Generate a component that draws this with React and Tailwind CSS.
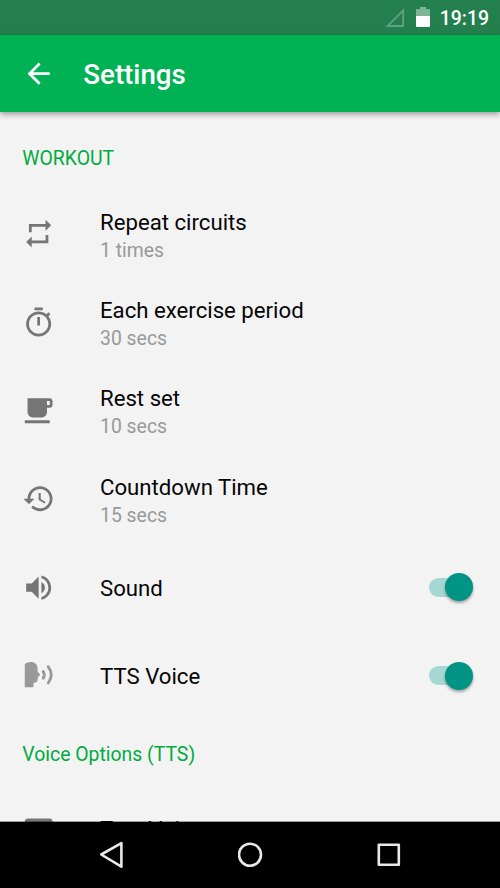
import React from "react";

const ICONS = {
  repeat: "M7 7h10v3l4-4-4-4v3H5v6h2V7zm10 10H7v-3l-4 4 4 4v-3h12v-6h-2v4z",
  timer:
    "M15 1H9v2h6V1zm-4 13h2V8h-2v6zm8.03-6.61l1.42-1.42c-.43-.51-.9-.99-1.41-1.41l-1.42 1.42C16.07 4.74 14.12 4 12 4c-4.97 0-9 4.03-9 9s4.02 9 9 9 9-4.03 9-9c0-2.12-.74-4.07-1.97-5.61zM12 20c-3.87 0-7-3.13-7-7s3.13-7 7-7 7 3.13 7 7-3.13 7-7 7z",
  cafe: "M20 3H4v10c0 2.21 1.79 4 4 4h6c2.21 0 4-1.79 4-4v-3h2c1.11 0 2-.89 2-2V5c0-1.11-.89-2-2-2zm0 5h-2V5h2v3zM2 21h18v-2H2v2z",
  history:
    "M13 3c-4.97 0-9 4.03-9 9H1l3.89 3.89.07.14L9 12H6c0-3.87 3.13-7 7-7s7 3.13 7 7-3.13 7-7 7c-1.93 0-3.68-.79-4.94-2.06l-1.42 1.42C8.27 19.99 10.51 21 13 21c4.97 0 9-4.03 9-9s-4.03-9-9-9zm-1 5v5l4.28 2.54.72-1.21-3.5-2.08V8H12z",
  volume:
    "M3 9v6h4l5 5V4L7 9H3zm13.5 3c0-1.77-1.02-3.29-2.5-4.03v8.05c1.48-.73 2.5-2.25 2.5-4.02zM14 3.23v2.06c2.89.86 5 3.54 5 6.71s-2.11 5.85-5 6.71v2.06c4.01-.91 7-4.49 7-8.77s-2.99-7.86-7-8.77z",
  message: "M4 3.2h16c1.1 0 2 .9 2 2V18H2V5.2c0-1.1.9-2 2-2z",
};

function Icon({ name }) {
  if (name === "voice") {
    return (
      <svg viewBox="0 0 24 24" className="size-[33.3px] shrink-0 text-[#999999]" fill="currentColor">
        <path d="M2 4C2.9 2.8 4.4 2.2 6.3 2.2c2.9 0 4.8 1.7 4.9 4.5V9l1.7 2c.3.4.2.8-.3 1l-.9.3v1.1l-.5.5.2.8-.4.6v.5c0 .7-.4 1-1 1-1.2.1-1.7.5-1.7 1.4v1.2c0 .7-.3 1-.9 1H2z" />
        <path d="M15.3 9q1.5 2.4 0 4.8" fill="none" stroke="currentColor" strokeWidth="2.1" strokeLinecap="round" />
        <path d="M18.9 5.5q4.4 5.9 0 11.8" fill="none" stroke="currentColor" strokeWidth="2" strokeLinecap="round" />
      </svg>
    );
  }
  return (
    <svg viewBox="0 0 24 24" className="size-[33.3px] shrink-0 text-[#757575]" fill="currentColor">
      <path d={ICONS[name]} />
    </svg>
  );
}

function Switch() {
  return (
    <span role="switch" aria-checked="true" className="ml-auto flex h-[19px] w-[44px] items-center justify-end rounded-full bg-[#a6d8d3]">
      <span className="size-[28px] shrink-0 rounded-full bg-[#009485] shadow-[0_2px_3px_rgba(0,0,0,0.35)]" />
    </span>
  );
}

function Row({ icon, title, value, toggle }) {
  return (
    <div className="flex h-[88.3px] shrink-0 items-center pr-[27px] pl-[22.3px]">
      <Icon name={icon} />
      <div className={value ? "ml-[44.4px] pt-[4px]" : toggle ? "ml-[44.4px] pt-[1px]" : "ml-[44.4px] pb-[4px]"}>
        <div className="text-[22.2px] leading-[28px] text-[#060606]">{title}</div>
        {value && <div className="pt-[1px] text-[19.4px] leading-[28px] text-[#999999]">{value}</div>}
      </div>
      {toggle && <Switch />}
    </div>
  );
}

function SectionTitle({ children }) {
  return (
    <h2 className="flex h-[66.6px] shrink-0 items-center pt-[3px] pl-[22.3px] text-[19.4px] text-[#00ab3f]">
      {children}
    </h2>
  );
}

export default function App() {
  return (
    <div className="flex h-[888px] w-[500px] flex-col overflow-hidden bg-[#f3f3f3] font-[Roboto,sans-serif]">
      <div className="flex h-[35px] shrink-0 items-center justify-end bg-[#23804e] pr-[11px] text-white">
        <svg viewBox="0 0 20 20" className="mr-[11px] size-[20px]" fill="none" stroke="#61a17f" strokeWidth="1.8">
          <path d="M2.5 18H18.2V2.3z" />
        </svg>
        <svg viewBox="0 0 14 21" className="mr-[10px] h-[21px] w-[14px]">
          <path d="M4 0h6v2h3q1 0 1 1v7H0V3q0-1 1-1h3z" fill="#7fb496" />
          <path d="M0 9h14v10q0 1-1 1H1q-1 0-1-1z" fill="#fff" />
        </svg>
        <span className="pt-[2px] text-[19.4px] leading-none font-medium">19:19</span>
      </div>
      <header className="relative z-10 flex h-[77px] shrink-0 items-center bg-[#00b253] pl-[22px] text-white shadow-[0_2px_6px_rgba(0,0,0,0.4)]">
        <svg viewBox="0 0 24 24" className="size-[33.3px]" fill="currentColor">
          <path d="M20 11H7.83l5.59-5.59L12 4l-8 8 8 8 1.41-1.41L7.83 13H20v-2z" />
        </svg>
        <h1 className="ml-[28px] pt-[2px] text-[27.7px] leading-none font-medium">Settings</h1>
      </header>
      <main className="-mb-px flex h-[710px] shrink-0 flex-col overflow-hidden pt-[11.4px]">
        <SectionTitle>WORKOUT</SectionTitle>
        <Row icon="repeat" title="Repeat circuits" value="1 times" />
        <Row icon="timer" title="Each exercise period" value="30 secs" />
        <Row icon="cafe" title="Rest set" value="10 secs" />
        <Row icon="history" title="Countdown Time" value="15 secs" />
        <Row icon="volume" title="Sound" toggle />
        <Row icon="voice" title="TTS Voice" toggle />
        <SectionTitle>Voice Options (TTS)</SectionTitle>
        <Row icon="message" title="Test Voice" />
      </main>
      <nav className="relative z-10 flex h-[67px] shrink-0 items-center justify-between border-t border-black/35 bg-black bg-clip-padding pr-[99px] pl-[98px]">
        <svg viewBox="0 0 26 28" className="h-[28px] w-[26px]" fill="none" stroke="#e9e9e9" strokeWidth="2.6" strokeLinejoin="round">
          <path d="M3.2 13.5L23.4 2.1v23.6z" />
        </svg>
        <svg viewBox="0 0 26 26" className="size-[26px]" fill="none" stroke="#e9e9e9" strokeWidth="2.6">
          <circle cx="12" cy="12.7" r="11" />
        </svg>
        <svg viewBox="0 0 24 24" className="size-[24px]" fill="none" stroke="#e9e9e9" strokeWidth="2.6" strokeLinejoin="round">
          <path d="M1.8 1.7h20v20h-20z" />
        </svg>
      </nav>
    </div>
  );
}
